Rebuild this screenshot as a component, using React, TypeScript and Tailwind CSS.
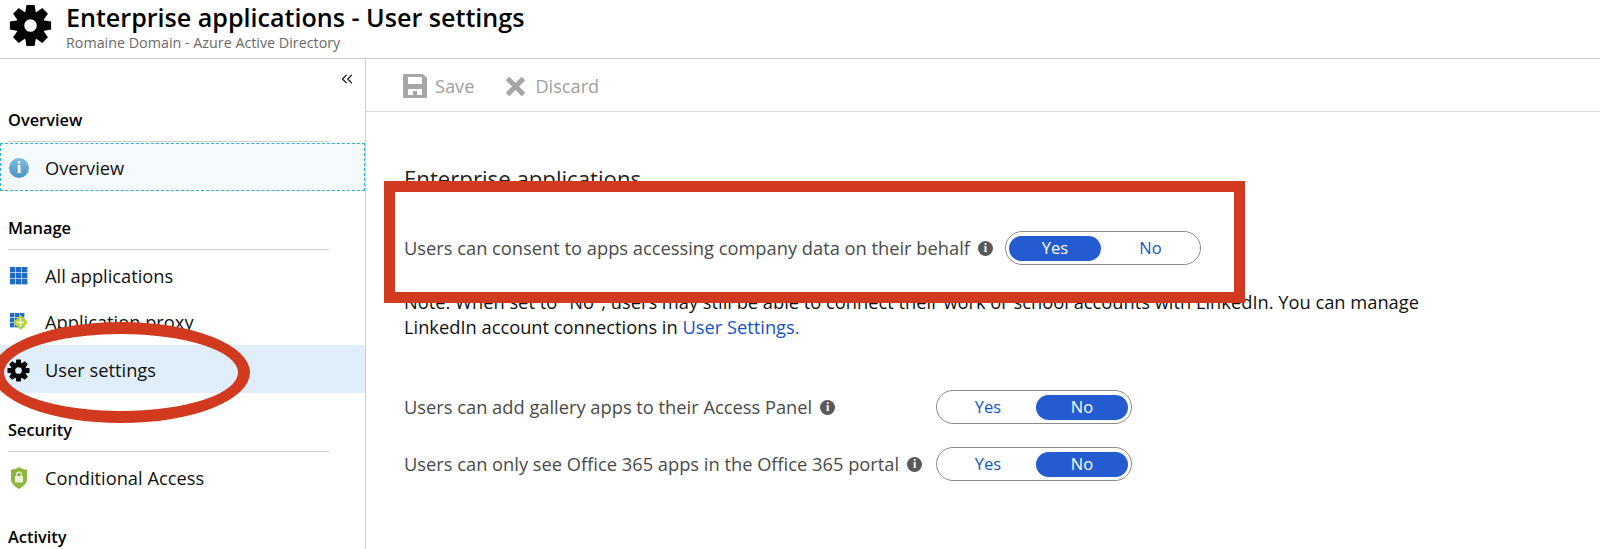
import { ChevronsLeft } from "lucide-react";

const font = "font-['Open_Sans','Noto_Sans',sans-serif]";

function Gear({ className }: { className: string }) {
  const teeth = [0, 45, 90, 135, 180, 225, 270, 315];
  return (
    <svg viewBox="0 0 48 48" className={className}>
      {teeth.map((a) => (
        <path key={a} d="M19.5 1h9l1.5 9h-12z" fill="currentColor" transform={`rotate(${a} 24 24)`} />
      ))}
      <path
        fillRule="evenodd"
        fill="currentColor"
        d="M24 8a16 16 0 1 1 0 32a16 16 0 1 1 0-32zM24 17a7 7 0 1 0 0 14a7 7 0 1 0 0-14z"
      />
    </svg>
  );
}

function GridIcon() {
  return (
    <svg viewBox="0 0 18 18" className="h-[18px] w-[18px]">
      {[0, 6, 12].flatMap((y) =>
        [0, 6, 12].map((x) => <rect key={`${x}-${y}`} x={x} y={y} width="5.4" height="5.4" fill="#1f6cc4" />)
      )}
    </svg>
  );
}

function ProxyIcon() {
  return (
    <svg viewBox="0 0 18 18" className="h-[18px] w-[18px]">
      {[0, 5, 10].flatMap((y) =>
        [0, 5, 10].map((x) => <rect key={`${x}-${y}`} x={x} y={y} width="4.4" height="4.4" fill="#1f6cc4" />)
      )}
      <path d="M10.500 2 18 9.500 10.500 17 3 9.500z" fill="#b5d334" />
      <path d="M10.500 5.500v8M6.500 9.500h8" stroke="#f2f7d8" strokeWidth="1.500" />
    </svg>
  );
}

function ShieldIcon() {
  return (
    <svg viewBox="0 0 18 22" className="h-[22px] w-[18px]">
      <path d="M9 0c2 1.600 5 2.600 8 2.600v10c0 4-4 7-8 9.400c-4-2.400-8-5.400-8-9.400v-10c3 0 6-1 8-2.600z" fill="#8cb63c" />
      <rect x="5" y="9" width="8" height="6.500" rx="0.500" fill="#eef5dc" />
      <path d="M6.600 9V7.500a2.400 2.400 0 0 1 4.800 0V9" fill="none" stroke="#eef5dc" strokeWidth="1.200" />
    </svg>
  );
}

function SaveIcon() {
  return (
    <svg viewBox="0 0 24 24" className="h-6 w-6">
      <path
        fillRule="evenodd"
        fill="#a6a6a6"
        d="M1 0h19l4 4v19a1 1 0 0 1-1 1H1a1 1 0 0 1-1-1V1a1 1 0 0 1 1-1zM5 3v7h14V3zM5 15v6h14v-6z"
      />
      <rect x="10" y="17" width="4" height="4" fill="#a6a6a6" />
    </svg>
  );
}

function DiscardIcon() {
  return (
    <svg viewBox="0 0 21 21" className="h-[21px] w-[21px]">
      <path d="M2.500 2.500 18.500 18.500M18.500 2.500 2.500 18.500" stroke="#a6a6a6" strokeWidth="5" />
    </svg>
  );
}

function InfoDot() {
  return (
    <span className="ml-[8px] flex h-[15px] w-[15px] shrink-0 items-center justify-center rounded-full bg-[#595959] font-['Liberation_Serif',serif] text-[12px] font-bold leading-none text-white">
      i
    </span>
  );
}

function Toggle({ on }: { on: "Yes" | "No" }) {
  return (
    <div className="flex h-[34px] w-[196px] shrink-0 items-center rounded-full border border-[#8a8a8a] px-[3px]">
      {on === "Yes" ? (
        <>
          <span className="flex h-[25px] w-[92px] items-center justify-center rounded-full bg-[#245bd0] text-[16.500px] text-white">Yes</span>
          <span className="flex h-[25px] w-[96px] items-center justify-center pl-[3px] text-[16.500px] text-[#1553cc]">No</span>
        </>
      ) : (
        <>
          <span className="flex h-[25px] w-[96px] items-center justify-center text-[16.500px] text-[#1553cc]">Yes</span>
          <span className="flex h-[25px] w-[92px] items-center justify-center rounded-full bg-[#245bd0] text-[16.500px] text-white">No</span>
        </>
      )}
    </div>
  );
}

function SideHeading({ label }: { label: string }) {
  return (
    <div className="mr-[36px] ml-[8px]">
      <p className="text-[16.400px] font-semibold leading-[22px] text-black">{label}</p>
    </div>
  );
}

function SideRule() {
  return <div className="mt-[10px] mr-[36px] ml-[8px] h-px bg-[#cfcfcf]" />;
}

function SideItem({ icon, label, className = "" }: { icon: React.ReactNode; label: string; className?: string }) {
  return (
    <div className={`flex items-center text-[18.300px] text-[#111] ${className}`}>
      <span className="flex w-[45px] justify-center pr-[8px]">{icon}</span>
      <span>{label}</span>
    </div>
  );
}

function Row({ label, on, labelWidth }: { label: string; on: "Yes" | "No"; labelWidth: string }) {
  return (
    <div className="flex h-[34px] items-center text-[18.300px] text-[#4a4a4a]">
      <div className={`flex items-center ${labelWidth}`}>
        <span className="whitespace-nowrap">{label}</span>
        <InfoDot />
      </div>
      <Toggle on={on} />
    </div>
  );
}

export default function App() {
  return (
    <div className={`relative h-[549px] w-[1600px] overflow-hidden bg-white ${font}`}>
      <header className="flex h-[59px] items-start border-b border-[#cfcfcf]">
        <Gear className="mt-[4px] ml-[9px] h-[43px] w-[43px] text-black" />
        <div className="ml-[14px]">
          <h1 className="text-[25.100px] font-semibold leading-[34px] text-black">Enterprise applications - User settings</h1>
          <p className="text-[14.300px] leading-[18px] text-[#6a6a6a]">Romaine Domain - Azure Active Directory</p>
        </div>
      </header>
      <div className="flex h-[490px]">
        <aside className="w-[366px] shrink-0 border-r border-[#cfcfcf]">
          <div className="flex h-[50px] justify-end pt-[11px] pr-[9px]">
            <ChevronsLeft className="h-[18px] w-[18px] text-[#222]" strokeWidth={1.600} />
          </div>
          <SideHeading label="Overview" />
          <SideRule />
          <div className="mt-[1px] flex h-[48px] items-center border border-dashed border-[#35ace0] bg-[#f5fafd] pt-[2px] text-[18.300px] text-[#111]">
            <span className="flex w-[44px] justify-center pr-[8px]">
              <span className="flex h-5 w-5 items-center justify-center rounded-full bg-linear-to-b from-[#7fbbdd] to-[#4a94c4]">
                <span className="font-['Liberation_Serif',serif] text-[16px] font-bold leading-none text-white">i</span>
              </span>
            </span>
            Overview
          </div>
          <div className="mt-[26px]">
            <SideHeading label="Manage" />
          </div>
          <SideRule />
          <SideItem icon={<GridIcon />} label="All applications" className="mt-[3px] h-[46px]" />
          <SideItem icon={<ProxyIcon />} label="Application proxy" className="h-[46px]" />
          <SideItem icon={<Gear className="h-[23px] w-[23px] text-black" />} label="User settings" className="h-[48px] bg-[#e0eefb] pt-[2px]" />
          <div className="mt-[26px]">
            <SideHeading label="Security" />
          </div>
          <SideRule />
          <SideItem icon={<ShieldIcon />} label="Conditional Access" className="mt-[1px] h-[48px] pt-[1px]" />
          <div className="mt-[25px]">
            <SideHeading label="Activity" />
          </div>
        </aside>
        <main className="min-w-0 flex-1">
          <div className="flex h-[53px] items-center border-b border-[#dcdcdc] pt-[3px] pl-[37px] text-[18.200px] text-[#a0a0a0]">
            <span className="flex items-center gap-[8px]">
              <SaveIcon />
              Save
            </span>
            <span className="ml-[31px] flex items-center gap-[9px]">
              <DiscardIcon />
              Discard
            </span>
          </div>
          <div className="pl-[38px]">
            <h2 className="mt-[53px] text-[22.200px] leading-[28px] text-[#222]">Enterprise applications</h2>
            <div className="mt-[38px]">
              <Row label="Users can consent to apps accessing company data on their behalf" on="Yes" labelWidth="w-[601px]" />
            </div>
            <p className="mt-[24px] w-[1040px] text-[18.300px] leading-[25px] text-[#111]">
              Note: When set to "No", users may still be able to connect their work or school accounts with LinkedIn. You can manage LinkedIn account connections in <span className="text-[#1553cc]">User Settings.</span>
            </p>
            <div className="mt-[51px]">
              <Row label="Users can add gallery apps to their Access Panel" on="No" labelWidth="w-[532px]" />
            </div>
            <div className="mt-[23px]">
              <Row label="Users can only see Office 365 apps in the Office 365 portal" on="No" labelWidth="w-[532px]" />
            </div>
          </div>
        </main>
      </div>
      {/* red annotations painted over the screenshot */}
      <div className="absolute top-[181px] left-[384px] h-[122px] w-[861px] border-[11px] border-[#d13a1e]" />
      <div className="absolute top-[322px] left-[-8px] h-[101px] w-[258px] rounded-[50%] border-[12px] border-[#d13a1e]" />
    </div>
  );
}
